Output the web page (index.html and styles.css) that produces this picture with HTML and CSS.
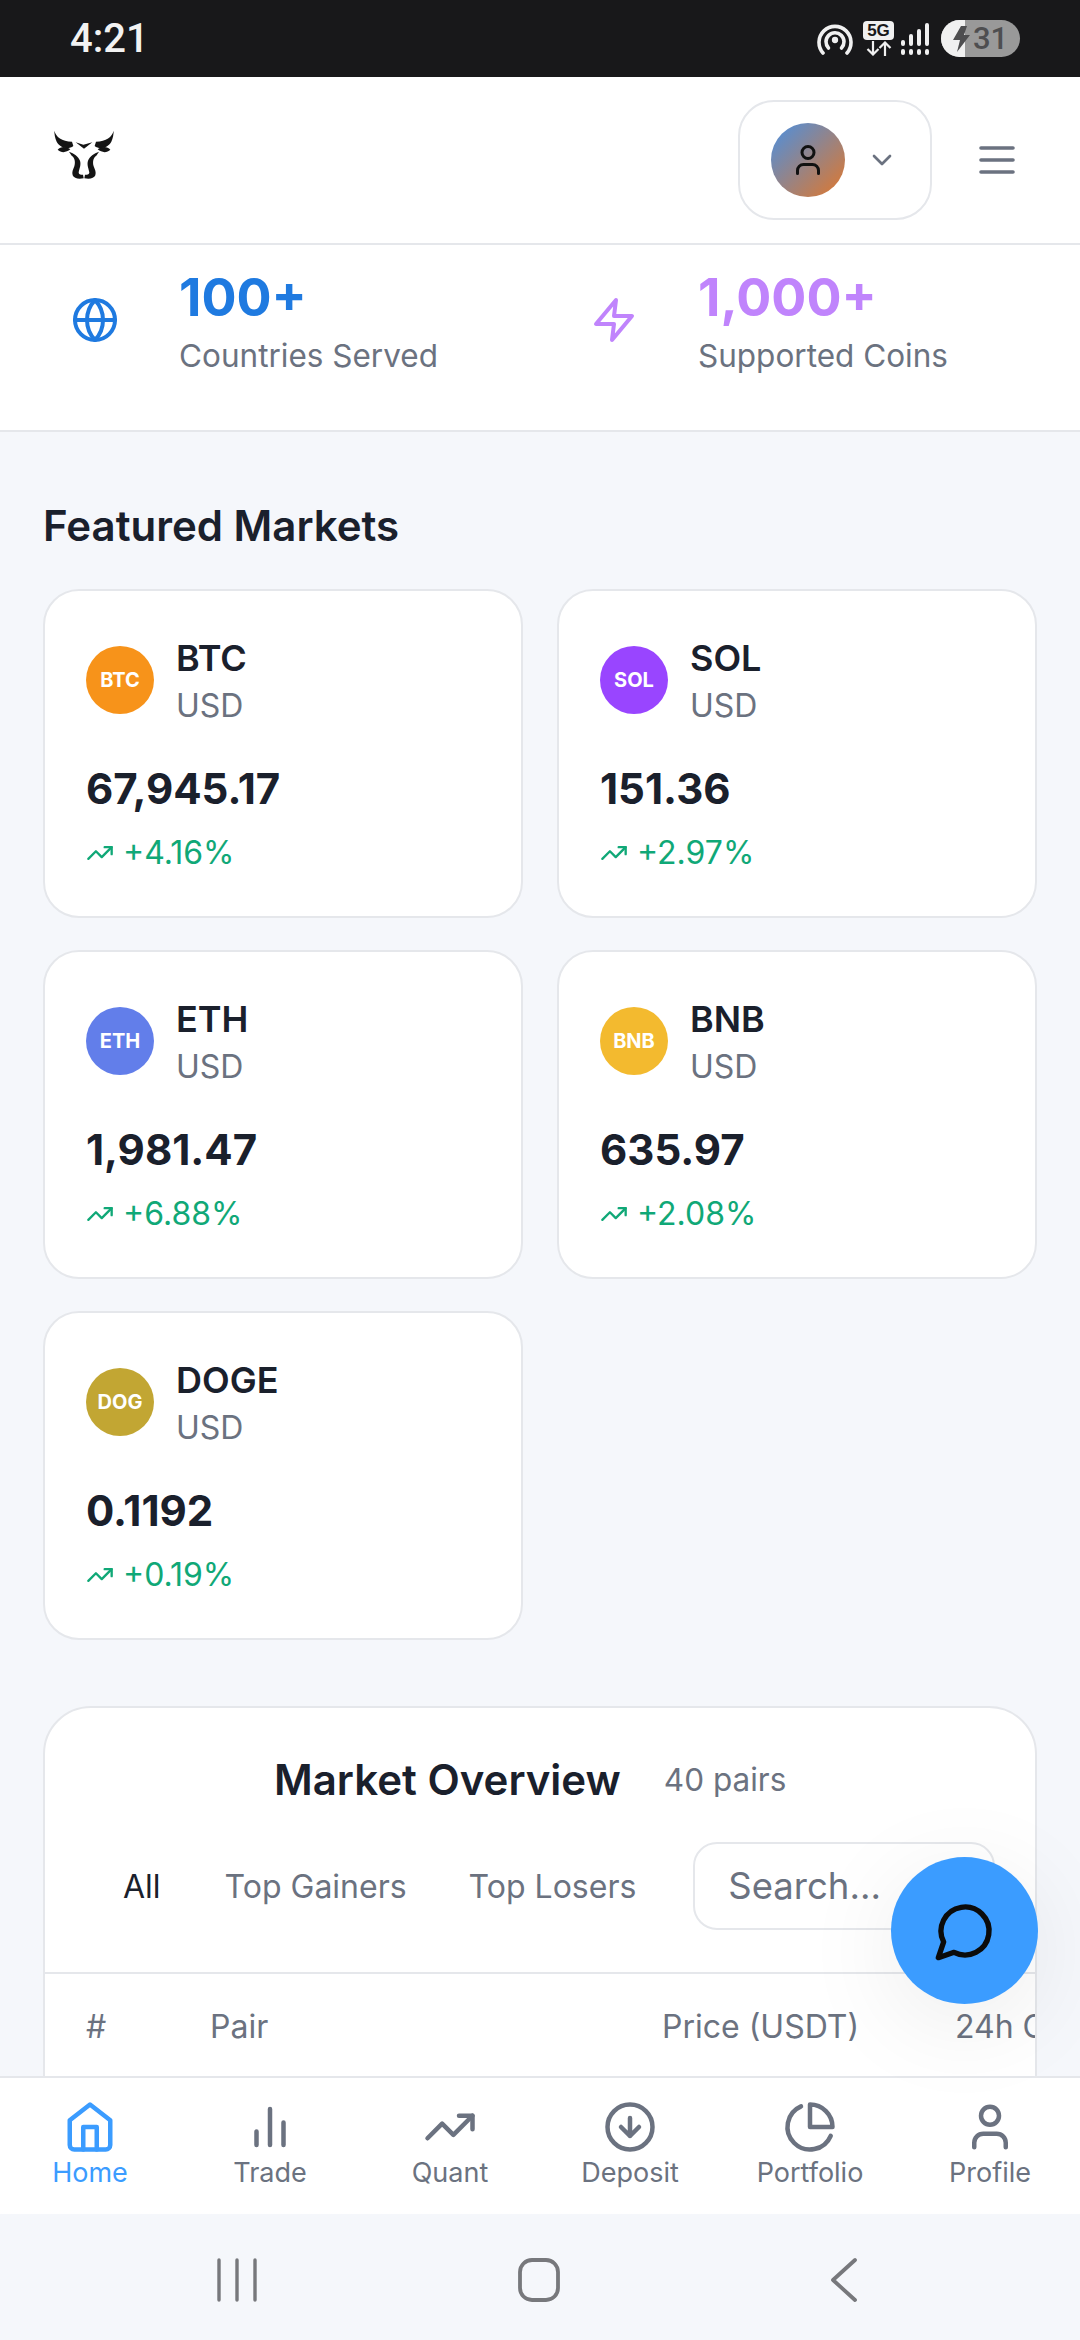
FILE: index.html
```html
<!DOCTYPE html>
<html>
<head>
    <title>Markets</title>
    <link rel="stylesheet" href="styles.css">
</head>
<body>
    <div class="status-bar">
        <span class="clock">4:21</span>
        <div class="status-icons">
            <svg class="hotspot" width="36" height="34" viewBox="0 0 36 34" fill="none" stroke="#f0f0f0" stroke-width="3.6" stroke-linecap="round">
                <path d="M6 31A16 16 0 1 1 30 31"/>
                <path d="M11.5 26A9 9 0 1 1 24.500 26"/>
                <circle cx="18" cy="18" r="2.400" fill="#f0f0f0" stroke-width="1.500"/>
            </svg>
            <div class="net">
                <span class="net-label">5G</span>
                <svg width="28" height="15" viewBox="0 0 28 15" fill="none" stroke="#f0f0f0" stroke-width="2.200">
                    <path d="M8 0v13M2.500 8l5.500 5.500L13.500 8"/>
                    <path d="M20 15V2M14.500 7L20 1.500 25.500 7"/>
                </svg>
            </div>
            <svg width="30" height="32" viewBox="0 0 30 32" fill="#f0f0f0">
                <rect x="1" y="17" width="4" height="6" rx="2"/>
                <rect x="9" y="11" width="4" height="12" rx="2"/>
                <rect x="17" y="6" width="4" height="17" rx="2"/>
                <rect x="25" y="0" width="4" height="23" rx="2"/>
                <rect x="1" y="26" width="4" height="6" rx="2"/>
                <rect x="9" y="26" width="4" height="6" rx="2"/>
                <rect x="17" y="26" width="4" height="6" rx="2"/>
                <rect x="25" y="26" width="4" height="6" rx="2"/>
            </svg>
            <div class="battery">
                <div class="battery-fill"></div>
                <svg class="bolt" width="18" height="26" viewBox="0 0 18 26" fill="#4e4e50"><path d="M9 0h6l-3 9h6L5 26l3-12H1z"/></svg>
                <span class="battery-num">31</span>
            </div>
        </div>
    </div>

    <header class="topbar">
        <svg class="logo" width="110" height="90" viewBox="0 0 330 270" fill="#141414">
            <g id="half">
                <path d="M73 65C78 84 95 97 126 98L130 111C115 124 90 116 80 98 75 87 73 75 73 65z"/>
                <path d="M83 122C92 112 108 112 121 121 108 132 93 132 83 122z"/>
                <path d="M117 128L125 140C134 146 137 158 133 172 129 182 125 190 128 199 132 209 146 211 161 208L159 197C150 199 146 196 146 190 148 178 154 168 150 155 145 142 132 133 117 128z"/>
            </g>
            <use href="#half" transform="translate(324 0) scale(-1 1)"/>
            <path d="M137 100L160 107 187 100 162 119z"/>
        </svg>
        <div class="topbar-right">
            <div class="account">
                <div class="avatar">
                    <svg class="icon" width="36" height="36" viewBox="0 0 24 24" stroke="#111" stroke-width="2">
                        <path d="M19 21v-2a4 4 0 0 0-4-4H9a4 4 0 0 0-4 4v2"/>
                        <circle cx="12" cy="7" r="4"/>
                    </svg>
                </div>
                <svg class="icon" width="32" height="32" viewBox="0 0 24 24" stroke="#6b7280" stroke-width="2"><path d="m6 9 6 6 6-6"/></svg>
            </div>
            <svg class="icon" width="36" height="28" viewBox="0 0 36 28" stroke="#6b7280" stroke-width="3.600"><path d="M2 2h32M2 14h32M2 26h32"/></svg>
        </div>
    </header>

    <section class="stats">
        <div class="stat">
            <svg class="icon stat-icon" width="48" height="48" viewBox="0 0 24 24" stroke="#1f7ae0" stroke-width="2">
                <circle cx="12" cy="12" r="10"/>
                <path d="M12 2a14.500 14.500 0 0 0 0 20 14.500 14.500 0 0 0 0-20"/>
                <path d="M2 12h20"/>
            </svg>
            <div>
                <div class="stat-value blue">100+</div>
                <div class="stat-label">Countries Served</div>
            </div>
        </div>
        <div class="stat">
            <svg class="icon stat-icon" width="48" height="48" viewBox="0 0 24 24" stroke="#c084fc" stroke-width="2">
                <path d="M13 2 3 14h9l-1 8 10-12h-9z"/>
            </svg>
            <div>
                <div class="stat-value purple">1,000+</div>
                <div class="stat-label">Supported Coins</div>
            </div>
        </div>
    </section>

    <main class="content">
        <h2 class="section-title">Featured Markets</h2>
        <div class="market-grid">
            <div class="market-card">
                <div class="coin-row">
                    <div class="coin-badge btc">BTC</div>
                    <div><div class="coin-name">BTC</div><div class="coin-quote">USD</div></div>
                </div>
                <div class="coin-price">67,945.17</div>
                <div class="coin-change">
                    <svg class="icon" width="28" height="28" viewBox="0 0 24 24" stroke="#10a877" stroke-width="2"><path d="M22 7 13.500 15.500 8.500 10.500 2 17"/><path d="M16 7h6v6"/></svg>
                    +4.16%
                </div>
            </div>
            <div class="market-card">
                <div class="coin-row">
                    <div class="coin-badge sol">SOL</div>
                    <div><div class="coin-name">SOL</div><div class="coin-quote">USD</div></div>
                </div>
                <div class="coin-price">151.36</div>
                <div class="coin-change">
                    <svg class="icon" width="28" height="28" viewBox="0 0 24 24" stroke="#10a877" stroke-width="2"><path d="M22 7 13.500 15.500 8.500 10.500 2 17"/><path d="M16 7h6v6"/></svg>
                    +2.97%
                </div>
            </div>
            <div class="market-card">
                <div class="coin-row">
                    <div class="coin-badge eth">ETH</div>
                    <div><div class="coin-name">ETH</div><div class="coin-quote">USD</div></div>
                </div>
                <div class="coin-price">1,981.47</div>
                <div class="coin-change">
                    <svg class="icon" width="28" height="28" viewBox="0 0 24 24" stroke="#10a877" stroke-width="2"><path d="M22 7 13.500 15.500 8.500 10.500 2 17"/><path d="M16 7h6v6"/></svg>
                    +6.88%
                </div>
            </div>
            <div class="market-card">
                <div class="coin-row">
                    <div class="coin-badge bnb">BNB</div>
                    <div><div class="coin-name">BNB</div><div class="coin-quote">USD</div></div>
                </div>
                <div class="coin-price">635.97</div>
                <div class="coin-change">
                    <svg class="icon" width="28" height="28" viewBox="0 0 24 24" stroke="#10a877" stroke-width="2"><path d="M22 7 13.500 15.500 8.500 10.500 2 17"/><path d="M16 7h6v6"/></svg>
                    +2.08%
                </div>
            </div>
            <div class="market-card">
                <div class="coin-row">
                    <div class="coin-badge doge">DOG</div>
                    <div><div class="coin-name">DOGE</div><div class="coin-quote">USD</div></div>
                </div>
                <div class="coin-price">0.1192</div>
                <div class="coin-change">
                    <svg class="icon" width="28" height="28" viewBox="0 0 24 24" stroke="#10a877" stroke-width="2"><path d="M22 7 13.500 15.500 8.500 10.500 2 17"/><path d="M16 7h6v6"/></svg>
                    +0.19%
                </div>
            </div>
        </div>

        <section class="overview">
            <div class="overview-head">
                <h2 class="overview-title">Market Overview</h2>
                <span class="overview-count">40 pairs</span>
            </div>
            <div class="overview-tools">
                <span class="tab active">All</span>
                <span class="tab">Top Gainers</span>
                <span class="tab">Top Losers</span>
                <div class="search">Search...</div>
            </div>
            <div class="table-head">
                <span class="col-rank">#</span>
                <span class="col-pair">Pair</span>
                <span class="col-price">Price (USDT)</span>
                <span class="col-change">24h Change</span>
            </div>
        </section>
    </main>

    <nav class="bottom-nav">
        <div class="nav-item active">
            <svg class="icon" width="54" height="54" viewBox="0 0 24 24" stroke="#3b9cff" stroke-width="2">
                <path d="M3 9l9-7 9 7v11a2 2 0 0 1-2 2H5a2 2 0 0 1-2-2z"/>
                <path d="M9 22V12h6v10"/>
            </svg>
            <span>Home</span>
        </div>
        <div class="nav-item">
            <svg class="icon" width="54" height="54" viewBox="0 0 24 24" stroke="#6b7280" stroke-width="2"><path d="M18 20V10M12 20V4M6 20v-6"/></svg>
            <span>Trade</span>
        </div>
        <div class="nav-item">
            <svg class="icon" width="54" height="54" viewBox="0 0 24 24" stroke="#6b7280" stroke-width="2"><path d="M22 7 13.500 15.500 8.500 10.500 2 17"/><path d="M16 7h6v6"/></svg>
            <span>Quant</span>
        </div>
        <div class="nav-item">
            <svg class="icon" width="54" height="54" viewBox="0 0 24 24" stroke="#6b7280" stroke-width="2"><circle cx="12" cy="12" r="10"/><path d="M12 8v8M8 12l4 4 4-4"/></svg>
            <span>Deposit</span>
        </div>
        <div class="nav-item">
            <svg class="icon" width="54" height="54" viewBox="0 0 24 24" stroke="#6b7280" stroke-width="2"><path d="M21.210 15.890A10 10 0 1 1 8 2.830"/><path d="M22 12A10 10 0 0 0 12 2v10z"/></svg>
            <span>Portfolio</span>
        </div>
        <div class="nav-item">
            <svg class="icon" width="54" height="54" viewBox="0 0 24 24" stroke="#6b7280" stroke-width="2"><path d="M19 21v-2a4 4 0 0 0-4-4H9a4 4 0 0 0-4 4v2"/><circle cx="12" cy="7" r="4"/></svg>
            <span>Profile</span>
        </div>
    </nav>

    <div class="system-nav">
        <svg class="icon" width="42" height="46" viewBox="0 0 42 46" stroke="#77787c" stroke-width="3.400"><path d="M3 3v40M21 3v40M39 3v40"/></svg>
        <svg class="icon" width="44" height="46" viewBox="0 0 44 46" stroke="#77787c" stroke-width="3.800"><rect x="3" y="3" width="38" height="40" rx="12"/></svg>
        <svg class="icon" width="30" height="46" viewBox="0 0 30 46" stroke="#77787c" stroke-width="3.800"><path d="M26 3 4 23l22 20"/></svg>
    </div>

    <button class="chat-fab">
        <svg class="icon" width="64" height="64" viewBox="0 0 24 24" stroke="#0b0b0b" stroke-width="2"><path d="M7.900 20A9 9 0 1 0 4 16.100L2 22Z"/></svg>
    </button>
</body>
</html>
```

FILE: styles.css
```css
* {
    box-sizing: border-box;
}
html, body {
    margin: 0;
    padding: 0;
}
body {
    position: relative;
    width: 1080px;
    height: 2340px;
    overflow: hidden;
    display: flex;
    flex-direction: column;
    font-family: Inter, "Noto Sans", sans-serif;
    background-color: #f5f7fb;
    color: #1a202c;
}
.icon {
    fill: none;
    stroke-linecap: round;
    stroke-linejoin: round;
    flex: none;
}

/* status bar */
.status-bar {
    height: 77px;
    flex: none;
    background-color: #18181a;
    display: flex;
    align-items: center;
    justify-content: space-between;
    padding: 0 60px 0 70px;
}
.clock {
    font-family: Roboto, sans-serif;
    font-weight: 500;
    font-size: 40px;
    color: #f2f2f2;
}
.status-icons {
    display: flex;
    align-items: center;
    gap: 6px;
}
.hotspot {
    margin-right: 4px;
}
.net {
    display: flex;
    flex-direction: column;
    align-items: center;
    gap: 1px;
}
.net-label {
    background-color: #f0f0f0;
    color: #18181a;
    font-family: "Liberation Sans", sans-serif;
    font-weight: 700;
    font-size: 17px;
    line-height: 19px;
    width: 31px;
    text-align: center;
    border-radius: 4px;
}
.battery {
    position: relative;
    width: 79px;
    height: 37px;
    margin-left: 5px;
    border-radius: 19px;
    overflow: hidden;
    background-color: #999;
    display: flex;
    align-items: center;
    padding-left: 11px;
    gap: 3px;
}
.battery-fill {
    position: absolute;
    left: 0;
    top: 0;
    bottom: 0;
    width: 24px;
    background-color: #f0f0f0;
}
.bolt, .battery-num {
    position: relative;
}
.battery-num {
    font-family: Roboto, sans-serif;
    font-weight: 500;
    font-size: 31px;
    color: #4e4e50;
}

/* header */
.topbar {
    height: 168px;
    flex: none;
    background-color: #fff;
    border-bottom: 2px solid #e5e7eb;
    display: flex;
    align-items: center;
    justify-content: space-between;
    padding: 0 65px 0 30px;
}
.logo {
    margin-bottom: 12px;
}
.topbar-right {
    display: flex;
    align-items: center;
    gap: 47px;
}
.account {
    width: 194px;
    height: 120px;
    border: 2px solid #e5e7eb;
    border-radius: 36px;
    display: flex;
    align-items: center;
    gap: 21px;
    padding-left: 31px;
}
.avatar {
    width: 74px;
    height: 74px;
    border-radius: 50%;
    background: linear-gradient(135deg, #4a90e2, #e2772a);
    display: flex;
    align-items: center;
    justify-content: center;
}

/* stats */
.stats {
    height: 187px;
    flex: none;
    background-color: #fff;
    border-bottom: 2px solid #e5e7eb;
    display: flex;
    padding: 21px 0 0 71px;
}
.stat {
    width: 519px;
    flex: none;
    display: flex;
    gap: 60px;
}
.stat-icon {
    margin-top: 30px;
}
.stat-value {
    font-size: 52px;
    font-weight: 700;
    line-height: 64px;
}
.blue {
    color: #1f7ae0;
}
.purple {
    color: #c084fc;
}
.stat-label {
    font-size: 31.5px;
    line-height: 52px;
    color: #6b7280;
}

/* featured */
.content {
    flex: 1;
    min-height: 0;
    overflow: hidden;
    padding: 0 43px;
}
.section-title {
    font-size: 42px;
    font-weight: 600;
    line-height: 50px;
    margin: 69px 0 38px;
}
.market-grid {
    display: grid;
    grid-template-columns: 480px 480px;
    gap: 32px 34px;
}
.market-card {
    height: 329px;
    background-color: #fff;
    border: 2px solid #e5e7eb;
    border-radius: 36px;
    padding: 43px 41px;
}
.coin-row {
    display: flex;
    align-items: center;
    gap: 22px;
}
.coin-badge {
    width: 68px;
    height: 68px;
    margin-top: -4px;
    border-radius: 50%;
    color: #fff;
    font-size: 20px;
    font-weight: 700;
    display: flex;
    align-items: center;
    justify-content: center;
}
.btc { background-color: #f7931a; }
.sol { background-color: #9945ff; }
.eth { background-color: #627eea; }
.bnb { background-color: #f3ba2f; }
.doge { background-color: #c2a633; }
.coin-name {
    font-size: 36px;
    font-weight: 600;
    line-height: 48px;
}
.coin-quote {
    font-size: 32px;
    line-height: 48px;
    color: #6b7280;
}
.coin-price {
    font-size: 42px;
    font-weight: 700;
    line-height: 52px;
    margin-top: 33px;
}
.coin-change {
    display: flex;
    align-items: center;
    gap: 9px;
    font-size: 32px;
    line-height: 44px;
    margin-top: 16px;
    color: #10a877;
}

/* market overview */
.overview {
    background-color: #fff;
    border: 2px solid #e5e7eb;
    border-radius: 48px 48px 0 0;
    margin-top: 66px;
    height: 500px;
    overflow: hidden;
}
.overview-head {
    display: flex;
    align-items: center;
    gap: 43px;
    padding: 18px 0 0 229px;
    height: 124px;
}
.overview-title {
    font-size: 42px;
    font-weight: 600;
    margin: 0;
}
.overview-count {
    font-size: 31.5px;
    color: #6b7280;
}
.overview-tools {
    display: flex;
    align-items: center;
    height: 142px;
    padding: 0 0 32px 78px;
    border-bottom: 2px solid #e5e7eb;
}
.tab {
    font-size: 32px;
    color: #6b7280;
    margin-right: 62px;
}
.tab.active {
    color: #1a202c;
    margin-right: 64px;
}
.search {
    width: 302px;
    height: 88px;
    flex: none;
    margin-left: -5px;
    border: 2px solid #e5e7eb;
    border-radius: 24px;
    font-size: 36.5px;
    color: #6b7280;
    display: flex;
    align-items: center;
    padding-left: 33px;
}
.table-head {
    display: flex;
    align-items: center;
    height: 104px;
    font-size: 32px;
    color: #6b7280;
    white-space: nowrap;
}
.col-rank {
    margin-left: 41px;
    width: 124px;
    flex: none;
}
.col-pair {
    width: 452px;
    flex: none;
}
.col-price {
    width: 293px;
    flex: none;
}
.col-change {
    flex: none;
}

/* bottom nav */
.bottom-nav {
    height: 138px;
    flex: none;
    background-color: #fff;
    border-top: 2px solid #e5e7eb;
    display: grid;
    grid-template-columns: repeat(6, 180px);
    position: relative;
    z-index: 1;
}
.nav-item {
    display: flex;
    flex-direction: column;
    align-items: center;
    padding-top: 22px;
    font-size: 27px;
    line-height: 38px;
    color: #6b7280;
}
.nav-item.active {
    color: #3b9cff;
}
.system-nav {
    height: 126px;
    flex: none;
    background-color: #f5f7fb;
    display: flex;
    align-items: center;
    gap: 0;
    padding: 6px 0 0 216px;
}
.system-nav svg:nth-child(2) {
    margin: 0 268px 0 259px;
}

/* chat button */
.chat-fab {
    position: absolute;
    left: 891px;
    top: 1857px;
    width: 147px;
    height: 147px;
    padding: 0;
    border: none;
    border-radius: 50%;
    background-color: #3b9cff;
    box-shadow: 0 20px 100px rgba(0, 0, 0, 0.08);
    display: flex;
    align-items: center;
    justify-content: center;
    z-index: 2;
}
```
